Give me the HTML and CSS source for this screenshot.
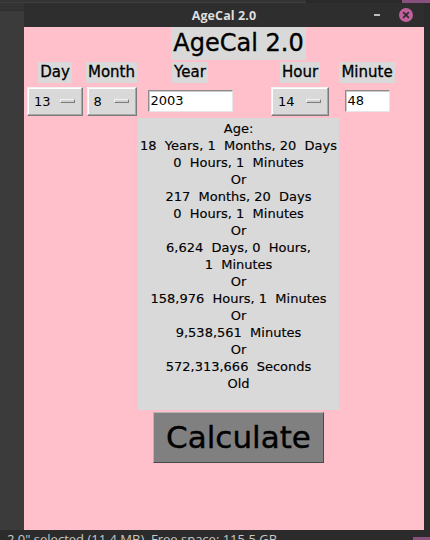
FILE: index.html
```html
<!DOCTYPE html>
<html>
<head>
<meta charset="utf-8">
<link rel="stylesheet" href="styles.css">
</head>
<body>
<div class="topstrip"><span class="ts1"></span><span class="ts2"></span><span class="ts3"></span></div>
<div class="middle">
  <div class="leftpane"></div>
  <div class="window">
    <div class="titlebar">
      <span class="wtitle">AgeCal 2.0</span>
      <span class="minimize"></span>
      <span class="close">
        <svg width="14" height="14" viewBox="0 0 14 14"><circle cx="7" cy="7" r="7" fill="#c1609b"/><path d="M4.6 4.6 L9.4 9.4 M9.4 4.6 L4.6 9.4" stroke="#2c2c2c" stroke-width="1.6" stroke-linecap="round"/></svg>
      </span>
    </div>
    <div class="content">
      <div class="grid">
        <div class="apptitle">AgeCal 2.0</div>
        <div class="lbl c1">Day</div>
        <div class="lbl c2">Month</div>
        <div class="lbl c3">Year</div>
        <div class="lbl c5">Hour</div>
        <div class="lbl c6">Minute</div>
        <div class="opt c1 w-day"><span class="otext">13</span><span class="ind"></span></div>
        <div class="opt c2 w-month"><span class="otext">8</span><span class="ind"></span></div>
        <div class="entry c3 w-year">2003</div>
        <div class="opt c5 w-hour"><span class="otext">14</span><span class="ind"></span></div>
        <div class="entry c6 w-min">48</div>
        <div class="result">Age:<br>18&nbsp; Years, 1&nbsp; Months, 20&nbsp; Days<br>0&nbsp; Hours, 1&nbsp; Minutes<br>Or<br>217&nbsp; Months, 20&nbsp; Days<br>0&nbsp; Hours, 1&nbsp; Minutes<br>Or<br>6,624&nbsp; Days, 0&nbsp; Hours,<br>1&nbsp; Minutes<br>Or<br>158,976&nbsp; Hours, 1&nbsp; Minutes<br>Or<br>9,538,561&nbsp; Minutes<br>Or<br>572,313,666&nbsp; Seconds<br>Old</div>
        <div class="calc">Calculate</div>
      </div>
    </div>
  </div>
  <div class="rightpane"></div>
</div>
<div class="statusbar"><span class="stext">2.0" selected (11.4 MB), Free space: 115.5 GB</span><span class="smark"></span></div>
</body>
</html>
```

FILE: styles.css
```css
html, body {
  margin: 0;
  padding: 0;
}
body {
  width: 430px;
  height: 540px;
  overflow: hidden;
  background: #2b2b2b;
  font-family: "Open Sans", "DejaVu Sans", sans-serif;
}
.topstrip {
  display: flex;
  height: 3px;
}
.ts1 {
  width: 306px;
  background: #343434;
  border-bottom: 1px solid #3e3e3e;
  box-sizing: border-box;
}
.ts2 {
  flex: 1;
  background: #2a2a2a;
}
.ts3 {
  width: 28px;
  background: #87507d;
}
.middle {
  display: flex;
  height: 527px;
}
.leftpane {
  width: 24px;
  background: linear-gradient(#333333 0, #333333 7px, #2e2e2e 7px, #2e2e2e 8px, #3b3b3b 8px);
}
.rightpane {
  flex: 1;
  background: #2b2b2b;
}
.window {
  width: 400px;
  display: flex;
  flex-direction: column;
}
.titlebar {
  height: 24px;
  background: #2e2e2e;
  display: flex;
  align-items: center;
  position: relative;
}
.wtitle {
  flex: 1;
  text-align: center;
  color: #dedede;
  font-weight: 700;
  font-size: 12.5px;
  letter-spacing: 0.1px;
}
.minimize {
  position: absolute;
  left: 350px;
  top: 11px;
  width: 6px;
  height: 2px;
  background: #bdbdbd;
}
.close {
  position: absolute;
  left: 375px;
  top: 5px;
  width: 14px;
  height: 14px;
  display: block;
}
.close svg {
  display: block;
}
.content {
  flex: 1;
  background: #ffc0cb;
  padding-left: 1px;
  font-family: "DejaVu Sans", sans-serif;
  color: #000;
}
.grid {
  display: grid;
  grid-template-columns: 60px 53px 104px 19px 78px 56px;
  grid-template-rows: 33px 24px 34px 292px 53px;
}
.apptitle {
  grid-column: 3 / 6;
  grid-row: 1;
  justify-self: center;
  background: #d9d9d9;
  font-size: 24px;
  line-height: 33px;
  height: 33px;
  padding: 0 2px;
  white-space: nowrap;
  -webkit-text-stroke: 0.35px #000;
}
.lbl {
  grid-row: 2;
  justify-self: center;
  align-self: start;
  margin-top: 2px;
  background: #d9d9d9;
  font-size: 15px;
  line-height: 21px;
  height: 21px;
  padding: 0 2px;
  -webkit-text-stroke: 0.3px #000;
}
.c1 { grid-column: 1; }
.c2 { grid-column: 2; }
.c3 { grid-column: 3; }
.c5 { grid-column: 5; }
.c6 { grid-column: 6; }
.opt {
  grid-row: 3;
  justify-self: center;
  align-self: center;
  box-sizing: border-box;
  height: 29px;
  background: #d9d9d9;
  border: 1px solid;
  border-color: #f2f2f2 #7a7a7a #7a7a7a #f2f2f2;
  box-shadow: inset -1px -1px 0 #a8a8a8, inset 1px 1px 0 #ffffff;
  display: flex;
  align-items: center;
  justify-content: space-between;
  padding: 0 7px 0 6px;
  font-size: 13px;
}
.w-day { width: 56px; }
.w-month { width: 50px; }
.w-hour { width: 58px; }
.ind {
  width: 15px;
  height: 4px;
  box-sizing: border-box;
  background: #d0d0d0;
  border: 1px solid;
  border-color: #f4f4f4 #7a7a7a #7a7a7a #f4f4f4;
}
.entry {
  grid-row: 3;
  justify-self: center;
  align-self: center;
  box-sizing: border-box;
  height: 22px;
  background: #ffffff;
  border: 1px solid;
  border-color: #8c8c8c #e6e6e6 #e6e6e6 #8c8c8c;
  box-shadow: inset 1px 1px 0 #c8c8c8;
  font-size: 13px;
  line-height: 20px;
  padding-left: 2px;
}
.w-year { width: 85px; }
.w-min { width: 45px; }
.result {
  grid-column: 3 / 6;
  grid-row: 4;
  background: #d9d9d9;
  text-align: center;
  font-size: 13px;
  line-height: 17px;
  padding-top: 2px;
  white-space: nowrap;
  -webkit-text-stroke: 0.15px #000;
}
.calc {
  grid-column: 3 / 6;
  grid-row: 5;
  justify-self: center;
  align-self: end;
  box-sizing: border-box;
  width: 171px;
  height: 51px;
  background: #808080;
  border: 1px solid;
  border-color: #b4b4b4 #4a4a4a #4a4a4a #b4b4b4;
  text-align: center;
  font-size: 31px;
  line-height: 48px;
  -webkit-text-stroke: 0.4px #000;
}
.statusbar {
  height: 10px;
  background: #2b2b2b;
  position: relative;
  overflow: hidden;
}
.stext {
  position: absolute;
  left: 7px;
  top: 1px;
  color: #c8c8c8;
  font-size: 13px;
  line-height: 16px;
  white-space: nowrap;
}
.smark {
  position: absolute;
  right: 0;
  top: 7px;
  width: 17px;
  height: 3px;
  background: #87507d;
}
```
